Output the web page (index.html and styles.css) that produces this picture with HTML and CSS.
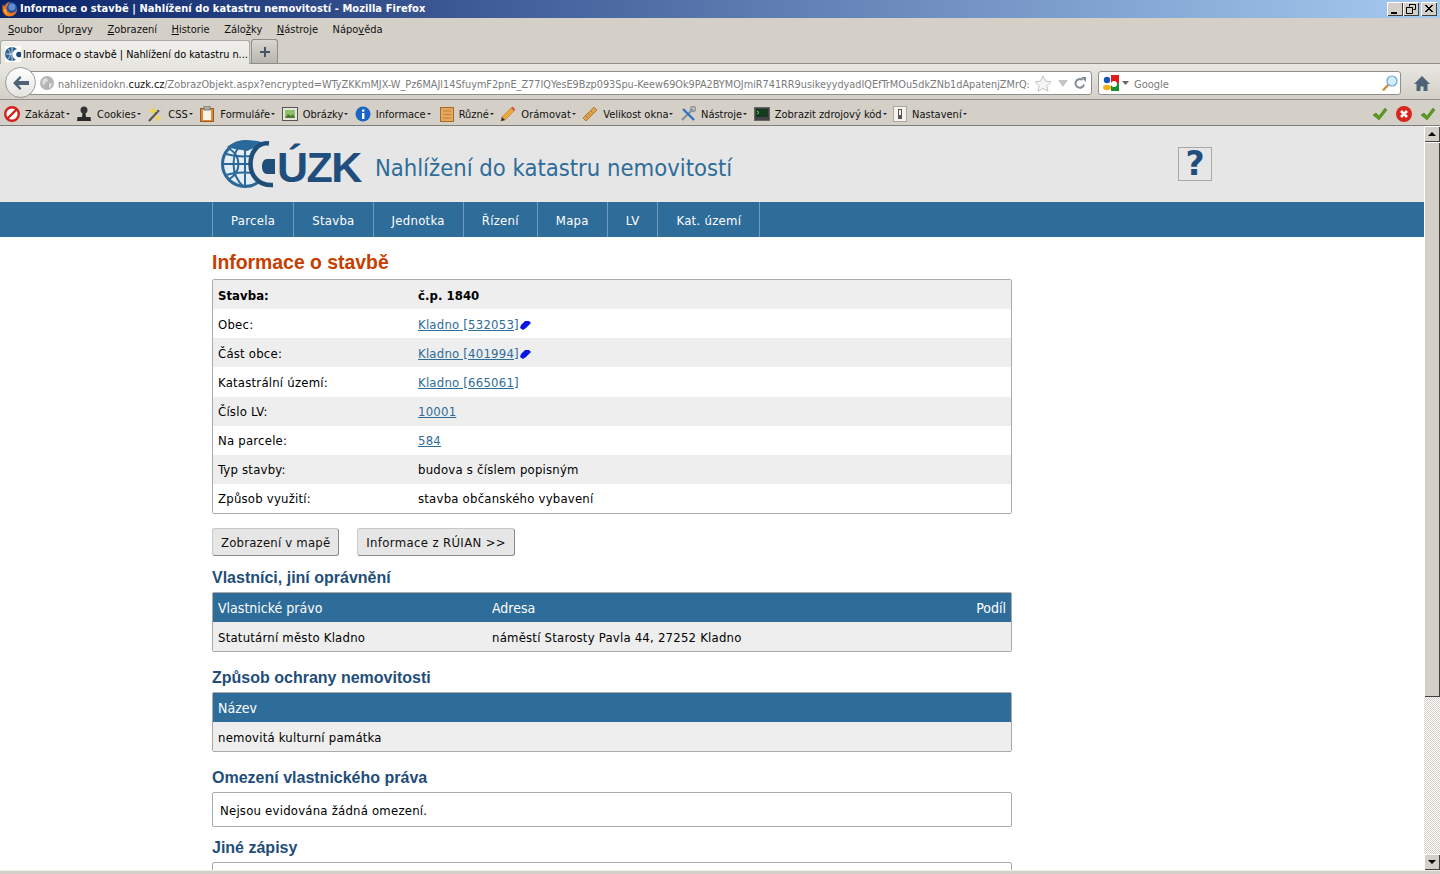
FILE: index.html
```html
<!DOCTYPE html>
<html lang="cs">
<head>
    <meta charset="UTF-8">
    <title>Informace o stavbě | Nahlížení do katastru nemovitostí</title>
    <link rel="stylesheet" href="styles.css">
</head>
<body>
<div class="window">

    <div class="titlebar">
        <svg class="ff-logo" width="16" height="16" viewBox="0 0 16 16"><circle cx="8.500" cy="8" r="7" fill="#2a4f9c"/><circle cx="10" cy="6" r="3.500" fill="#5f8fd0"/><path d="M1 3c.5 1.500 1 2 1.500 2.500C3.500 3 6 1 8.500.8 6.500 2 6 3 6 4c-1.500 1-2 3-1 5 1 2.500 4 3.500 6.500 2.500 1.500-.5 2.800-2 3.500-3.500-.2 4-3.200 7.500-7.500 7.500C3.500 15.500.5 12.500.5 8.500.5 6.500.5 4.500 1 3z" fill="#e8741b"/><path d="M2 8c0 3 2.500 6 5.500 6.500C5 13 3.500 10.500 4 8z" fill="#f6b72c"/></svg>
        <span class="title-text">Informace o stavbě | Nahlížení do katastru nemovitostí - Mozilla Firefox</span>
        <div class="win-btns">
            <span class="win-btn"><svg width="14" height="12" viewBox="0 0 14 12"><rect x="3" y="9" width="6" height="2" fill="#000"/></svg></span>
            <span class="win-btn"><svg width="14" height="12" viewBox="0 0 14 12"><path d="M5.500 1.500h6v5h-2M5.500 1.500v2M2.500 4.500h6v6h-6z M2.500 4.500h6M5.500 1.500h6" fill="none" stroke="#000"/></svg></span>
            <span class="win-btn win-close"><svg width="14" height="12" viewBox="0 0 14 12"><path d="M3 2l7 7M4 2l7 7M10 2L3 9M11 2L4 9" stroke="#000" fill="none"/></svg></span>
        </div>
    </div>

    <div class="menubar">
        <span><u>S</u>oubor</span>
        <span>Úpr<u>a</u>vy</span>
        <span><u>Z</u>obrazení</span>
        <span><u>H</u>istorie</span>
        <span>Zálo<u>ž</u>ky</span>
        <span><u>N</u>ástroje</span>
        <span>Nápo<u>v</u>ěda</span>
    </div>

    <div class="tabbar">
        <div class="tab">
            <svg class="favicon" width="16" height="16" viewBox="0 0 16 16"><rect width="16" height="16" fill="#fff"/><circle cx="7" cy="8" r="7" fill="#2c5f91"/><path d="M1 8h12M7 1v14M3 3c3 3 3 7 0 10" stroke="#dfe8ef" stroke-width=".9" fill="none"/><circle cx="13" cy="8.500" r="5.500" fill="#fff"/><circle cx="14" cy="8.500" r="2.800" fill="#1d4a7c"/></svg>
            <span class="tab-label">Informace o stavbě | Nahlížení do katastru n...</span>
        </div>
        <div class="tab-new"><svg width="12" height="12" viewBox="0 0 12 12"><path d="M6 1v10M1 6h10" stroke="#44546a" stroke-width="2"/></svg></div>
    </div>

    <div class="navbar">
        <div class="back-btn"><svg width="18" height="16" viewBox="0 0 18 16"><path d="M8 1L1 8l7 7 1.500-1.500L6.500 10H17V6H6.500l3-3.500z" fill="#4d6478"/></svg></div>
        <div class="urlbar">
            <svg class="globe" width="16" height="16" viewBox="0 0 16 16"><circle cx="8" cy="8" r="7" fill="#b4b4b4"/><path d="M4 4l4-1 1 3-3 2-1 3-2-3zM10 8l3 0-1 4-2 1z" fill="#dcdcdc"/></svg>
            <span class="url"><span class="url-dim">nahlizenidokn.</span><span class="url-host">cuzk.cz</span><span class="url-dim">/ZobrazObjekt.aspx?encrypted=WTyZKKmMJX-W_Pz6MAJl14SfuymF2pnE_Z77IQYesE9Bzp093Spu-Keew69Ok9PA2BYMOJmiR741RR9usikeyydyadIQEfTrMOu5dkZNb1dApatenjZMrQ:</span></span>
            <svg class="url-star" width="18" height="17" viewBox="0 0 18 17"><path d="M9 1l2.400 5.200 5.600.6-4.200 3.800 1.200 5.600L9 13.400l-5 2.800 1.200-5.600L1 6.800l5.600-.6z" fill="#f6f6f4" stroke="#c4c4c0"/></svg>
            <svg class="url-drop" width="10" height="7" viewBox="0 0 10 7"><path d="M0 0h10L5 7z" fill="#c2c6c8"/></svg>
            <svg class="url-reload" width="12" height="12" viewBox="0 0 12 12"><path d="M10 7.500A4.300 4.300 0 1 1 8.500 3" fill="none" stroke="#7e8c9a" stroke-width="2"/><path d="M7 0h5v5z" fill="#7e8c9a"/></svg>
        </div>
        <div class="searchbar">
            <svg class="search-logo" width="16" height="16" viewBox="0 0 16 16"><rect x="8" y="0" width="8" height="8" fill="#e21a1a"/><rect x="8" y="8" width="8" height="8" fill="#1d8c2e"/><circle cx="4" cy="5" r="3.200" fill="#1556b5"/><ellipse cx="4" cy="12.500" rx="4" ry="2.800" fill="#f0b21a"/><circle cx="11" cy="9" r="3" fill="#fff"/></svg>
            <svg class="search-drop" width="7" height="4" viewBox="0 0 7 4"><path d="M0 0h7L3.500 4z" fill="#666"/></svg>
            <span class="search-text">Google</span>
            <svg width="16" height="17" viewBox="0 0 16 17"><circle cx="10" cy="6" r="5" fill="#d5ecfb" stroke="#6aa6d6" stroke-width="1.200"/><path d="M6 10l-5 5.500" stroke="#c98a3a" stroke-width="2.400"/></svg>
        </div>
        <svg class="home" width="16" height="15" viewBox="0 0 16 15"><path d="M8 0L0 8h2.500v7h4v-4.500h3V15h4V8H16z" fill="#4d6478"/></svg>
    </div>

    <div class="devbar">
        <span class="dev-item"><svg width="16" height="16" viewBox="0 0 16 16"><circle cx="8" cy="8" r="6.800" fill="#fff" stroke="#d3201c" stroke-width="2.400"/><path d="M3.500 12.500l9-9" stroke="#d3201c" stroke-width="2.400"/></svg>Zakázat<i></i></span>
        <span class="dev-item"><svg width="16" height="16" viewBox="0 0 16 16"><circle cx="8" cy="4" r="3.500" fill="#333"/><path d="M6.500 7h3l.5 4h4.500l.5 4H1l.5-4H6z" fill="#2a2a2a"/></svg>Cookies<i></i></span>
        <span class="dev-item"><svg width="16" height="16" viewBox="0 0 16 16"><path d="M2 15L14 2" stroke="#555" stroke-width="2.200"/><path d="M12 4l2-2" stroke="#eee" stroke-width="2.200"/><path d="M6 0l1.200 3.800L11 5 7.200 6.200 6 10 4.800 6.200 1 5l3.800-1.200zM11 8l1 3 3 1-3 1-1 3-1-3-3-1 3-1z" fill="#f2d24a"/></svg>CSS<i></i></span>
        <span class="dev-item"><svg width="16" height="16" viewBox="0 0 16 16"><rect x="1.500" y="2.500" width="13" height="13" fill="#d98a3c" stroke="#9c5b1e"/><rect x="4" y="4" width="8" height="10" fill="#f7f4ea"/><rect x="5" y="0" width="6" height="4" fill="#b0b0b0" stroke="#777"/></svg>Formuláře<i></i></span>
        <span class="dev-item"><svg width="16" height="14" viewBox="0 0 16 14"><rect x=".5" y=".5" width="15" height="13" fill="#e6e6da" stroke="#555"/><rect x="3" y="3" width="10" height="8" fill="#8fbf6c"/><path d="M3 11l3-4 3 2 2-2 2 4z" fill="#4c7a34"/></svg>Obrázky<i></i></span>
        <span class="dev-item"><svg width="16" height="16" viewBox="0 0 16 16"><circle cx="8" cy="8" r="7.500" fill="#1b66c4"/><rect x="7" y="7" width="2.400" height="6" fill="#fff"/><rect x="7" y="3.500" width="2.400" height="2.200" fill="#fff"/></svg>Informace<i></i></span>
        <span class="dev-item dev-gap"><svg width="14" height="15" viewBox="0 0 14 15"><rect x=".5" y=".5" width="13" height="14" fill="#e6a85c" stroke="#a8692a"/><path d="M3 4h8M3 7.500h8M3 11h8" stroke="#bf7f38"/></svg>Různé<i></i></span>
        <span class="dev-item"><svg width="16" height="16" viewBox="0 0 16 16"><path d="M1 15l1-4L11 2l3 3-9 9z" fill="#eda73a" stroke="#b3762a" stroke-width=".6"/><path d="M11 2l1.500-1.500 3 3L14 5z" fill="#d9534f"/><path d="M1 15l1-4 3 3z" fill="#333"/></svg>Orámovat<i></i></span>
        <span class="dev-item"><svg width="16" height="16" viewBox="0 0 16 16"><path d="M1 12L12 1l3 3L4 15z" fill="#dda14e" stroke="#a9702a" stroke-width=".8"/><path d="M4 10l1.500 1.500M6.500 7.500L8 9M9 5l1.500 1.500" stroke="#a9702a" stroke-width=".8"/></svg>Velikost okna<i></i></span>
        <span class="dev-item"><svg width="16" height="16" viewBox="0 0 16 16"><path d="M2 14L13 3" stroke="#8a949c" stroke-width="2.400"/><path d="M14 14L3 3" stroke="#2f74c0" stroke-width="2.400"/><circle cx="13" cy="3" r="2.500" fill="none" stroke="#8a949c" stroke-width="1.400"/></svg>Nástroje<i></i></span>
        <span class="dev-item"><svg width="16" height="14" viewBox="0 0 16 14"><rect x=".5" y=".5" width="15" height="13" fill="#444" stroke="#666"/><rect x="2" y="2" width="12" height="8" fill="#143a1e"/><path d="M3 4l2 1.500L3 7" stroke="#6de06d" fill="none"/></svg>Zobrazit zdrojový kód<i></i></span>
        <span class="dev-item"><svg width="14" height="16" viewBox="0 0 14 16"><rect x=".5" y=".5" width="13" height="15" fill="#f4f2ea" stroke="#a8a8a0"/><rect x="5" y="3" width="4" height="10" fill="#555"/><rect x="6" y="4" width="2" height="5" fill="#eee"/></svg>Nastavení<i></i></span>
        <div class="dev-status">
            <svg width="16" height="14" viewBox="0 0 16 14"><path d="M1 8l3-2 3 3 6-8 2 2-8 10z" fill="#5a9a1e" stroke="#3f7312" stroke-width=".5"/></svg>
            <svg width="16" height="16" viewBox="0 0 16 16"><circle cx="8" cy="8" r="8" fill="#d9261c"/><path d="M5 5l6 6M11 5l-6 6" stroke="#fff" stroke-width="2.600"/></svg>
            <svg width="16" height="14" viewBox="0 0 16 14"><path d="M1 8l3-2 3 3 6-8 2 2-8 10z" fill="#5a9a1e" stroke="#3f7312" stroke-width=".5"/></svg>
        </div>
    </div>

    <div class="viewport">
        <div class="page">
            <div class="header">
                <div class="header-inner">
                    <div class="logo">
                        <svg class="logo-mark" width="56" height="50" viewBox="0 0 56 50">
                            <circle cx="24" cy="25" r="22.500" fill="#e4edf3" stroke="#2a689a" stroke-width="3"/>
                            <path d="M2 25h38M24 2v46M7 9c14 8 14 24 0 32M5 15c10 3 24 3 36 0M5 36c10-3 24-3 36 0M23 2C9 14 9 36 23 48" stroke="#2a689a" stroke-width="2" fill="none"/>
                            <path d="M6 8C14 1 30-1 44 4L26 12C16 10 10 10 6 8z" fill="#2a689a"/>
                            <circle cx="50.500" cy="25" r="21" fill="#e6e6e6"/>
                            <path d="M48 4.500C37 3 29.500 13 29.500 25S38 47 52 46" fill="none" stroke="#1f4e79" stroke-width="4.500"/>
                            <path d="M46 20h8v15h-8c-3 0-5-3-5-7.500S43 20 46 20z" fill="#1f4e79"/>
                        </svg>
                        <span class="logo-text">ÚZK</span>
                    </div>
                    <span class="app-name">Nahlížení do katastru nemovitostí</span>
                    <a class="help">?</a>
                </div>
            </div>
            <div class="topnav">
                <ul class="topnav-list">
                    <li>Parcela</li>
                    <li>Stavba</li>
                    <li>Jednotka</li>
                    <li>Řízení</li>
                    <li>Mapa</li>
                    <li>LV</li>
                    <li>Kat. území</li>
                </ul>
            </div>
            <div class="content">
                <h1>Informace o stavbě</h1>
                <table class="data zebra">
                    <tr class="strong"><td class="col-label">Stavba:</td><td>č.p. 1840</td></tr>
                    <tr><td>Obec:</td><td><a>Kladno [532053]<svg class="pen" width="11" height="9" viewBox="0 0 11 9"><path d="M0 7l1-3 4-4h4l2 2-5 5-3 2z" fill="#0a14e6"/></svg></a></td></tr>
                    <tr><td>Část obce:</td><td><a>Kladno [401994]<svg class="pen" width="11" height="9" viewBox="0 0 11 9"><path d="M0 7l1-3 4-4h4l2 2-5 5-3 2z" fill="#0a14e6"/></svg></a></td></tr>
                    <tr><td>Katastrální území:</td><td><a>Kladno [665061]</a></td></tr>
                    <tr><td>Číslo LV:</td><td><a>10001</a></td></tr>
                    <tr><td>Na parcele:</td><td><a>584</a></td></tr>
                    <tr><td>Typ stavby:</td><td>budova s číslem popisným</td></tr>
                    <tr><td>Způsob využití:</td><td>stavba občanského vybavení</td></tr>
                </table>
                <div class="buttons">
                    <button class="btn-map">Zobrazení v mapě</button>
                    <button class="btn-ruian">Informace z RÚIAN &gt;&gt;</button>
                </div>
                <h2 class="h2-first">Vlastníci, jiní oprávnění</h2>
                <table class="data">
                    <tr class="head"><td class="col-owner">Vlastnické právo</td><td>Adresa</td><td class="right">Podíl</td></tr>
                    <tr><td>Statutární město Kladno</td><td>náměstí Starosty Pavla 44, 27252 Kladno</td><td></td></tr>
                </table>
                <h2>Způsob ochrany nemovitosti</h2>
                <table class="data">
                    <tr class="head"><td>Název</td></tr>
                    <tr><td>nemovitá kulturní památka</td></tr>
                </table>
                <h2>Omezení vlastnického práva</h2>
                <div class="note">Nejsou evidována žádná omezení.</div>
                <h2 class="h2-short">Jiné zápisy</h2>
                <div class="note"></div>
            </div>
        </div>
        <div class="scrollbar">
            <div class="sb-btn"><svg width="8" height="4" viewBox="0 0 8 4"><path d="M0 4h8L4 0z"/></svg></div>
            <div class="sb-thumb"></div>
            <div class="sb-track"></div>
            <div class="sb-btn"><svg width="8" height="4" viewBox="0 0 8 4"><path d="M0 0h8L4 4z"/></svg></div>
        </div>
    </div>
    <div class="bottom-edge"></div>
</div>
</body>
</html>
```

FILE: styles.css
```css
html, body {
    margin: 0;
    padding: 0;
    height: 874px;
    overflow: hidden;
}
body {
    font-family: "DejaVu Sans Condensed", "Noto Sans", sans-serif;
    font-size: 11px;
    color: #000;
    background: #d4d0c8;
}
.window {
    display: flex;
    flex-direction: column;
    height: 874px;
}

/* title bar */
.titlebar {
    display: flex;
    align-items: center;
    flex: none;
    height: 18px;
    background: linear-gradient(to right, #0a246a, #a6caf0);
    color: #fff;
    font-weight: bold;
    padding: 0 3px 0 2px;
}
.ff-logo {
    margin-right: 2px;
}
.title-text {
    flex: 1;
    padding-bottom: 1px;
    letter-spacing: .07px;
    white-space: nowrap;
}
.win-btns {
    display: flex;
}
.win-btn {
    display: flex;
    align-items: center;
    justify-content: center;
    width: 16px;
    height: 14px;
    background: #d4d0c8;
    box-shadow: inset 1px 1px 0 #fff, inset -1px -1px 0 #404040;
}
.win-close {
    margin-left: 2px;
}

/* menu */
.menubar {
    display: flex;
    flex: none;
    gap: 14.500px;
    align-items: center;
    box-sizing: border-box;
    height: 22px;
    padding: 0 0 0 8px;
    color: #111;
}

/* tabs */
.tabbar {
    display: flex;
    flex: none;
    align-items: flex-end;
    height: 24px;
    border-bottom: 1px solid #8c8c88;
    box-sizing: border-box;
}
.tab {
    display: flex;
    align-items: center;
    gap: 2px;
    box-sizing: border-box;
    width: 250px;
    height: 24px;
    margin-bottom: -1px;
    padding: 3px 0 0 4px;
    background: linear-gradient(#f0efeb, #e7e6e1);
    border: 1px solid #a8a8a4;
    border-bottom: none;
    border-radius: 3px 3px 0 0;
    font-size: 10.800px;
    white-space: nowrap;
}
.favicon {
    flex: none;
}
.tab-new {
    display: flex;
    align-items: center;
    justify-content: center;
    box-sizing: border-box;
    width: 27px;
    height: 24px;
    margin-left: 1px;
    background: linear-gradient(#d9d6d0, #b9b6b0);
    border: 1px solid #8c8c88;
    border-bottom: none;
    border-radius: 3px 3px 0 0;
}

/* navigation bar */
.navbar {
    display: flex;
    flex: none;
    align-items: center;
    position: relative;
    box-sizing: border-box;
    height: 36px;
    padding: 3px 0 0 5px;
    background: linear-gradient(#e8e7e2, #d4d0c8);
    border-bottom: 1px solid #8f8f8b;
}
.back-btn {
    position: absolute;
    left: 5px;
    top: 3px;
    z-index: 1;
    display: flex;
    align-items: center;
    justify-content: center;
    box-sizing: border-box;
    width: 31px;
    height: 31px;
    border-radius: 50%;
    background: linear-gradient(#fff, #e4e3de);
    border: 1px solid #9a9a96;
}
.urlbar {
    display: flex;
    align-items: center;
    box-sizing: border-box;
    width: 1077px;
    height: 24px;
    margin-left: 10px;
    padding: 0 4px 0 23px;
    background: #fff;
    border: 1px solid #8e8e8a;
    border-radius: 0 3px 3px 0;
    font-size: 10.800px;
}
.globe {
    flex: none;
    margin-right: 3px;
}
.url {
    flex: 1;
    overflow: hidden;
    padding: 3px 0 0;
    line-height: 16px;
    white-space: nowrap;
}
.url-dim {
    color: #7b7b7b;
}
.url-host {
    color: #111;
}
.url-star {
    flex: none;
    margin-left: 5px;
}
.url-drop {
    flex: none;
    margin: 0 5px 0 6px;
}
.url-reload {
    flex: none;
    margin: 0 1px;
}
.searchbar {
    display: flex;
    align-items: center;
    box-sizing: border-box;
    width: 303px;
    height: 24px;
    margin-left: 6px;
    padding: 0 2px 0 4px;
    background: #fff;
    border: 1px solid #8e8e8a;
    border-radius: 3px;
}
.search-drop {
    margin: 0 5px 0 3px;
}
.search-text {
    flex: 1;
    padding-top: 2px;
    color: #7b7b7b;
}
.home {
    margin-left: 13px;
}

/* web developer toolbar */
.devbar {
    display: flex;
    flex: none;
    align-items: center;
    box-sizing: border-box;
    height: 26px;
    padding: 3px 4px 0 4px;
    border-bottom: 1px solid #7e7e7a;
    color: #111;
    white-space: nowrap;
}
.dev-item {
    display: flex;
    align-items: center;
    gap: 5px;
    margin-right: 6.500px;
}
.dev-gap {
    margin-left: 2.500px;
}
.dev-item i {
    width: 0;
    height: 0;
    margin-left: -4px;
    border-left: 2px solid transparent;
    border-right: 2px solid transparent;
    border-top: 2px solid #222;
}
.dev-status {
    display: flex;
    align-items: center;
    gap: 8px;
    margin-left: auto;
}

/* page */
.viewport {
    display: flex;
    flex: 1;
    min-height: 0;
}
.page {
    flex: 1;
    overflow: hidden;
    background: #fff;
    font-size: 13px;
    letter-spacing: .22px;
}
.header {
    height: 76px;
    background: #e6e6e6;
}
.header-inner {
    display: flex;
    align-items: center;
    position: relative;
    box-sizing: border-box;
    width: 1000px;
    height: 76px;
    margin-left: 212px;
    padding: 0 0 0 9px;
}
.logo {
    display: flex;
    align-items: flex-end;
    height: 50px;
}
.logo-mark {
    flex: none;
}
.logo-text {
    font-family: "Liberation Sans", Arial, sans-serif;
    font-size: 43px;
    line-height: 44px;
    font-weight: bold;
    color: #1f4e7e;
    letter-spacing: -1.500px;
}
.app-name {
    margin-left: 14px;
    margin-top: 8px;
    font-size: 23.600px;
    letter-spacing: 0;
    color: #2e6c99;
}
.help {
    position: absolute;
    right: 0;
    top: 21px;
    box-sizing: border-box;
    width: 34px;
    height: 34px;
    border: 1px solid #a9a9a9;
    text-align: center;
    font-family: "DejaVu Sans", Arial, sans-serif;
    font-size: 33px;
    font-weight: bold;
    line-height: 32px;
    letter-spacing: 0;
    color: #1f4e7e;
}
.topnav {
    height: 35px;
    background: #2e6c99;
}
.topnav-list {
    display: flex;
    margin: 0 0 0 212px;
    padding: 0;
    list-style: none;
    border-left: 1px solid #6f9cbd;
}
.topnav-list li {
    padding: 0 18px;
    height: 35px;
    line-height: 37px;
    letter-spacing: .28px;
    color: #fff;
    border-right: 1px solid #6f9cbd;
}
.content {
    width: 800px;
    margin-left: 212px;
}
h1 {
    margin: 0;
    padding-top: 13px;
    height: 29px;
    font-family: "Liberation Sans", Arial, sans-serif;
    font-size: 19.400px;
    line-height: 24px;
    letter-spacing: 0;
    color: #c63f00;
}
h2 {
    margin: 0;
    padding-top: 17px;
    height: 23px;
    font-family: "Liberation Sans", Arial, sans-serif;
    font-size: 16px;
    line-height: 18px;
    letter-spacing: 0;
    color: #1f4e79;
}
.h2-first {
    padding-top: 13px;
}
.h2-short {
    padding-top: 12px;
}
.data {
    box-sizing: border-box;
    width: 800px;
    border: 1px solid #aaa;
    border-radius: 2px;
    border-collapse: separate;
    border-spacing: 0;
}
.data td {
    height: 29px;
    padding: 1px 5px 0;
    box-sizing: border-box;
    background: #eee;
}
.zebra td {
    height: 29.125px;
}
.zebra tr:nth-child(even) td {
    background: #fff;
}
.data a {
    color: #2e6c99;
    text-decoration: underline;
}
.col-label {
    width: 200px;
}
.col-owner {
    width: 274px;
}
.strong td {
    font-weight: bold;
    letter-spacing: .05px;
}
.data tr.head td {
    background: #2e6c99;
    color: #fff;
    font-size: 14px;
    letter-spacing: 0;
}
.right {
    text-align: right;
}
.pen {
    vertical-align: -1px;
    margin-left: 1px;
}
.buttons {
    display: flex;
    gap: 18px;
    padding-top: 14px;
}
button {
    height: 28px;
    padding: 0 8px;
    background: #e6e6e6;
    border: 1px solid #c8c8c8;
    border-right-color: #8a8a8a;
    border-bottom-color: #8a8a8a;
    border-radius: 3px;
    font-family: inherit;
    font-size: 13px;
    letter-spacing: .2px;
    color: #111;
}
.btn-ruian {
    letter-spacing: .35px;
}
.note {
    box-sizing: border-box;
    height: 35px;
    padding: 0 7px;
    line-height: 35px;
    border: 1px solid #aaa;
    border-radius: 2px;
}

/* scrollbar */
.scrollbar {
    display: flex;
    flex: none;
    flex-direction: column;
    width: 16px;
    background: #d4d0c8;
}
.sb-btn {
    display: flex;
    flex: none;
    align-items: center;
    justify-content: center;
    height: 16px;
    box-shadow: inset 1px 1px 0 #fff, inset -1px -1px 0 #404040;
}
.sb-thumb {
    flex: none;
    height: 555px;
    box-shadow: inset 1px 1px 0 #fff, inset -1px -1px 0 #404040;
}
.sb-track {
    flex: 1;
    background: repeating-conic-gradient(#d4d0c8 0 25%, #fff 0 50%) 0 0 / 2px 2px;
}
.bottom-edge {
    flex: none;
    height: 4px;
    background: #d4d0c8;
    border-top: 1px solid #f0eee8;
    box-sizing: border-box;
}
```
